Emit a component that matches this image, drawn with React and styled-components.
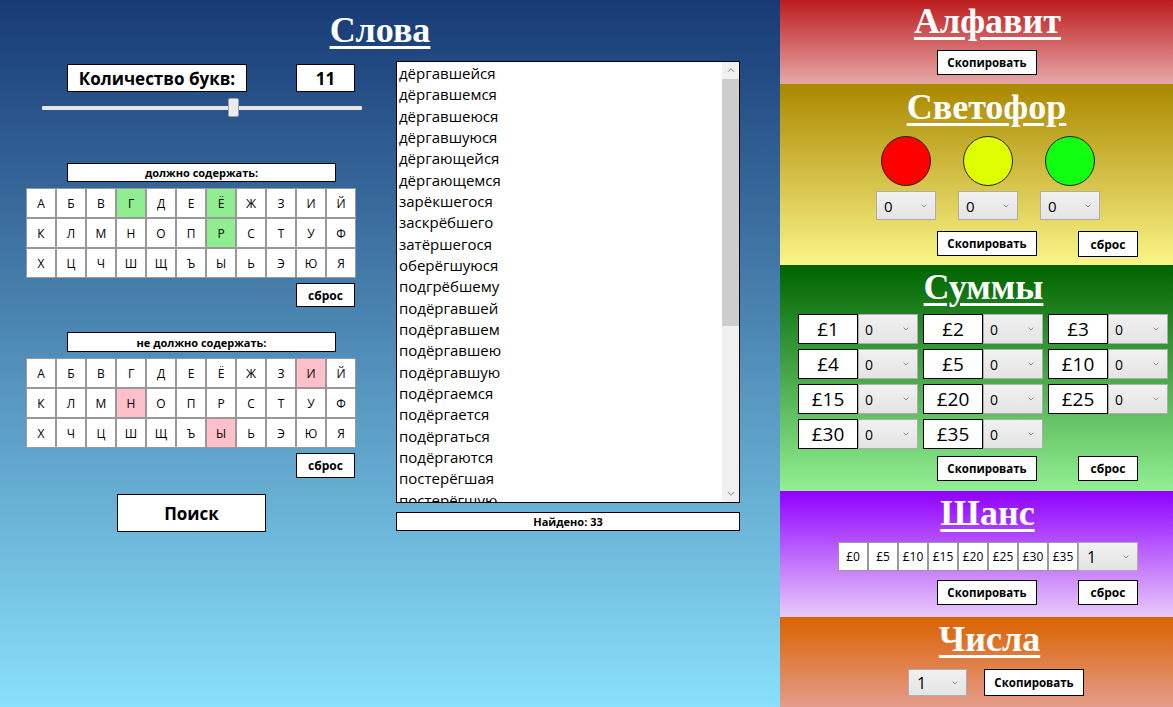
import React from "react";
import styled, { createGlobalStyle } from "styled-components";

const GlobalStyle = createGlobalStyle`
  html, body { margin: 0; padding: 0; }
  body { font-family: "Open Sans", "Noto Sans", sans-serif; color: #000; }
  * { box-sizing: border-box; }
`;

const Page = styled.div`
  display: flex;
  width: 1173px;
  height: 707px;
  overflow: hidden;
`;

const LeftPane = styled.div`
  width: 780px;
  height: 707px;
  background: linear-gradient(#173a75, #89e0fb);
  display: flex;
  flex-direction: column;
`;

const Title = styled.h1`
  margin: ${(p) => p.$top || 0}px 0 0;
  padding-right: ${(p) => p.$shiftL || 0}px;
  padding-left: ${(p) => p.$shiftR || 0}px;
  font-family: "Liberation Serif", "Times New Roman", serif;
  font-weight: bold;
  font-size: 36px;
  line-height: 40px;
  height: 40px;
  color: #fff;
  text-align: center;
  text-decoration: underline;
  text-decoration-thickness: 3px;
  text-underline-offset: 4px;
`;

const Body = styled.div`
  display: flex;
  gap: 34px;
  padding-left: 26px;
`;

const Controls = styled.div`
  width: 336px;
  display: flex;
  flex-direction: column;
  padding-top: 14px;
`;

const CountRow = styled.div`
  display: flex;
  gap: 49px;
  margin-left: 41px;
`;

const BoxLabel = styled.div`
  width: ${(p) => p.$w}px;
  height: 28px;
  background: #fff;
  border: 1px solid #000;
  display: flex;
  align-items: center;
  justify-content: center;
  font-weight: 700;
  font-size: 17px;
`;

const SliderWrap = styled.div`
  position: relative;
  margin: 6px 0 0 16px;
  width: 320px;
  height: 19px;
  display: flex;
  align-items: center;
`;

const Track = styled.div`
  width: 100%;
  height: 4px;
  background: #e6e6e6;
  border-radius: 1px;
`;

const Thumb = styled.div`
  position: absolute;
  top: 0;
  width: 11px;
  height: 19px;
  background: #ececec;
  border: 1px solid #9f9f9f;
  border-radius: 2px;
`;

const SmallLabel = styled.div`
  margin: ${(p) => p.$top}px 0 0 41px;
  width: 269px;
  height: ${(p) => p.$h}px;
  background: #fff;
  border: 1px solid #000;
  display: flex;
  align-items: center;
  justify-content: center;
  font-weight: 700;
  font-size: 11px;
`;

const LetterGrid = styled.div`
  margin-top: 6px;
  display: grid;
  grid-template-columns: repeat(11, 30px);
  grid-auto-rows: 30px;
  width: 330px;
`;

const Cell = styled.div`
  background: ${(p) => p.$bg || "#fff"};
  border: 1px solid #999;
  display: flex;
  align-items: center;
  justify-content: center;
  font-size: 12px;
`;

const Button = styled.div`
  width: ${(p) => p.$w || 100}px;
  height: ${(p) => p.$h || 25}px;
  background: #fff;
  border: 1px solid #000;
  display: flex;
  align-items: center;
  justify-content: center;
  font-weight: 700;
  font-size: ${(p) => p.$fs || 11.5}px;
  flex-shrink: 0;
`;

const ResetRow = styled.div`
  margin: 5px 0 0 270px;
`;

const SearchRow = styled.div`
  margin: 16px 0 0 91px;
`;

const ListCol = styled.div`
  display: flex;
  flex-direction: column;
  padding-top: 11px;
  width: 344px;
`;

const ListBox = styled.div`
  height: 442px;
  background: #fff;
  border: 1px solid #000;
  display: flex;
  overflow: hidden;
`;

const Words = styled.div`
  flex: 1;
  padding: 1px 0 0 2px;
  overflow: hidden;
`;

const Word = styled.div`
  font-size: 15px;
  line-height: 21.33px;
  white-space: nowrap;
`;

const Scrollbar = styled.div`
  width: 17px;
  background: #f0f0f0;
  display: flex;
  flex-direction: column;
`;

const ScrollArrow = styled.div`
  height: 17px;
  display: flex;
  align-items: center;
  justify-content: center;
`;

const ScrollThumb = styled.div`
  height: 247px;
  background: #cdcdcd;
`;

const ScrollSpace = styled.div`
  flex: 1;
`;

const FoundBox = styled.div`
  margin-top: 9px;
  height: 19px;
  background: #fff;
  border: 1px solid #000;
  display: flex;
  align-items: center;
  justify-content: center;
  font-weight: 700;
  font-size: 11px;
`;

const RightPane = styled.div`
  width: 393px;
  display: flex;
  flex-direction: column;
`;

const Section = styled.div`
  height: ${(p) => p.$h}px;
  background: linear-gradient(${(p) => p.$from}, ${(p) => p.$to});
  display: flex;
  flex-direction: column;
`;

const ButtonRow = styled.div`
  display: flex;
  gap: 41px;
  margin: ${(p) => p.$top}px 0 0 157px;
`;

const LightsRow = styled.div`
  display: grid;
  grid-template-columns: repeat(3, 60px);
  column-gap: 22px;
  row-gap: 5px;
  margin: 9px 0 0 96px;
`;

const Light = styled.div`
  width: 50px;
  height: 50px;
  border-radius: 50%;
  background: ${(p) => p.$c};
  border: 1px solid #222;
  justify-self: center;
`;

const SelectBox = styled.div`
  width: ${(p) => p.$w || 60}px;
  height: ${(p) => p.$h || 29}px;
  background: linear-gradient(#f1f1f1, #e4e4e4);
  border: 1px solid #adadad;
  display: flex;
  align-items: center;
  justify-content: space-between;
  padding: 0 8px 0 ${(p) => p.$pl || 6}px;
  font-size: ${(p) => p.$fs || 15}px;
  flex-shrink: 0;
`;

const SumsGrid = styled.div`
  display: grid;
  grid-template-columns: repeat(3, 120px);
  column-gap: 5px;
  row-gap: 5px;
  margin: 7px 0 0 18px;
`;

const SumPair = styled.div`
  display: flex;
`;

const SumLabel = styled.div`
  width: 60px;
  height: 30px;
  background: #fff;
  border: 1px solid #000;
  display: flex;
  align-items: center;
  justify-content: center;
  font-size: 19px;
`;

const ChanceRow = styled.div`
  display: flex;
  margin: 9px 0 0 58px;
`;

const ChanceCell = styled.div`
  width: 30px;
  height: 29px;
  background: #fff;
  border: 1px solid #999;
  display: flex;
  align-items: center;
  justify-content: center;
  font-size: 12px;
`;

const NumbersRow = styled.div`
  display: flex;
  gap: 17px;
  margin: 10px 0 0 128px;
`;

const Chevron = ({ size = 7, color = "#777", up }) => (
  <svg width={size} height={size * 0.6} viewBox="0 0 10 6">
    <path
      d={up ? "M1 5 L5 1 L9 5" : "M1 1 L5 5 L9 1"}
      fill="none"
      stroke={color}
      strokeWidth="1.3"
    />
  </svg>
);

const Select = ({ value, ...rest }) => (
  <SelectBox {...rest}>
    <span>{value}</span>
    <Chevron size={6} />
  </SelectBox>
);

const row1 = ["А", "Б", "В", "Г", "Д", "Е", "Ё", "Ж", "З", "И", "Й"];
const row2 = ["К", "Л", "М", "Н", "О", "П", "Р", "С", "Т", "У", "Ф"];
const row3a = ["Х", "Ц", "Ч", "Ш", "Щ", "Ъ", "Ы", "Ь", "Э", "Ю", "Я"];
const row3b = ["Х", "Ч", "Ц", "Ш", "Щ", "Ъ", "Ы", "Ь", "Э", "Ю", "Я"];

const mustContain = ["Г", "Ё", "Р"];
const mustNot = ["И", "Н", "Ы"];

const words = [
  "дёргавшейся", "дёргавшемся", "дёргавшеюся", "дёргавшуюся", "дёргающейся",
  "дёргающемся", "зарёкшегося", "заскрёбшего", "затёршегося", "оберёгшуюся",
  "подгрёбшему", "подёргавшей", "подёргавшем", "подёргавшею", "подёргавшую",
  "подёргаемся", "подёргается", "подёргаться", "подёргаются", "постерёгшая",
  "постерёгшую",
];

const sums = ["£1", "£2", "£3", "£4", "£5", "£10", "£15", "£20", "£25", "£30", "£35"];
const chances = ["£0", "£5", "£10", "£15", "£20", "£25", "£30", "£35"];

const Grid = ({ rows, marked, color }) => (
  <LetterGrid>
    {rows.flat().map((l, i) => (
      <Cell key={i} $bg={marked.includes(l) ? color : undefined}>
        {l}
      </Cell>
    ))}
  </LetterGrid>
);

export default function App() {
  return (
    <Page>
      <GlobalStyle />
      <LeftPane>
        <Title $top={10} $shiftL={20}>Слова</Title>
        <Body>
          <Controls>
            <CountRow>
              <BoxLabel $w={180}>Количество букв:</BoxLabel>
              <BoxLabel $w={59}>11</BoxLabel>
            </CountRow>
            <SliderWrap>
              <Track />
              <Thumb style={{ left: "186px" }} />
            </SliderWrap>
            <SmallLabel $top={46} $h={19}>должно содержать:</SmallLabel>
            <Grid rows={[row1, row2, row3a]} marked={mustContain} color="#90ee90" />
            <ResetRow>
              <Button $w={59} $h={24} $fs={12}>сброс</Button>
            </ResetRow>
            <SmallLabel $top={25} $h={20}>не должно содержать:</SmallLabel>
            <Grid rows={[row1, row2, row3b]} marked={mustNot} color="#ffc0cb" />
            <ResetRow>
              <Button $w={59} $h={25} $fs={12}>сброс</Button>
            </ResetRow>
            <SearchRow>
              <Button $w={149} $h={38} $fs={17}>Поиск</Button>
            </SearchRow>
          </Controls>
          <ListCol>
            <ListBox>
              <Words>
                {words.map((w) => (
                  <Word key={w}>{w}</Word>
                ))}
              </Words>
              <Scrollbar>
                <ScrollArrow>
                  <Chevron size={8} color="#a3a3a3" up />
                </ScrollArrow>
                <ScrollThumb />
                <ScrollSpace />
                <ScrollArrow>
                  <Chevron size={8} color="#a3a3a3" />
                </ScrollArrow>
              </Scrollbar>
            </ListBox>
            <FoundBox>Найдено: 33</FoundBox>
          </ListCol>
        </Body>
      </LeftPane>

      <RightPane>
        <Section $h={84} $from="#bd1c1e" $to="#e7a8a8">
          <Title $top={1} $shiftR={22}>Алфавит</Title>
          <ButtonRow $top={9}>
            <Button>Скопировать</Button>
          </ButtonRow>
        </Section>

        <Section $h={181} $from="#aa8800" $to="#faf588">
          <Title $top={3} $shiftR={20}>Светофор</Title>
          <LightsRow>
            <Light $c="#ff0000" />
            <Light $c="#ddff00" />
            <Light $c="#11ff11" />
            <Select value="0" $pl={7} />
            <Select value="0" $pl={7} />
            <Select value="0" $pl={7} />
          </LightsRow>
          <ButtonRow $top={11}>
            <Button>Скопировать</Button>
            <Button $w={60} $h={26} $fs={12}>сброс</Button>
          </ButtonRow>
        </Section>

        <Section $h={226} $from="#006400" $to="#93ef93">
          <Title $top={2} $shiftR={14}>Суммы</Title>
          <SumsGrid>
            {sums.map((s) => (
              <SumPair key={s}>
                <SumLabel>{s}</SumLabel>
                <Select value="0" $w={60} $h={30} $fs={14} />
              </SumPair>
            ))}
          </SumsGrid>
          <ButtonRow $top={7}>
            <Button>Скопировать</Button>
            <Button $w={60} $fs={12}>сброс</Button>
          </ButtonRow>
        </Section>

        <Section $h={126} $from="#9000ff" $to="#e9cbf9">
          <Title $top={2} $shiftR={22}>Шанс</Title>
          <ChanceRow>
            {chances.map((c) => (
              <ChanceCell key={c}>{c}</ChanceCell>
            ))}
            <Select value="1" $w={60} $h={29} $fs={16} $pl={8} />
          </ChanceRow>
          <ButtonRow $top={9}>
            <Button>Скопировать</Button>
            <Button $w={60} $fs={12}>сброс</Button>
          </ButtonRow>
        </Section>

        <Section $h={90} $from="#db6200" $to="#e59c8b">
          <Title $top={2} $shiftR={26}>Числа</Title>
          <NumbersRow>
            <Select value="1" $w={59} $h={27} $fs={16} $pl={8} />
            <Button $h={27}>Скопировать</Button>
          </NumbersRow>
        </Section>
      </RightPane>
    </Page>
  );
}
